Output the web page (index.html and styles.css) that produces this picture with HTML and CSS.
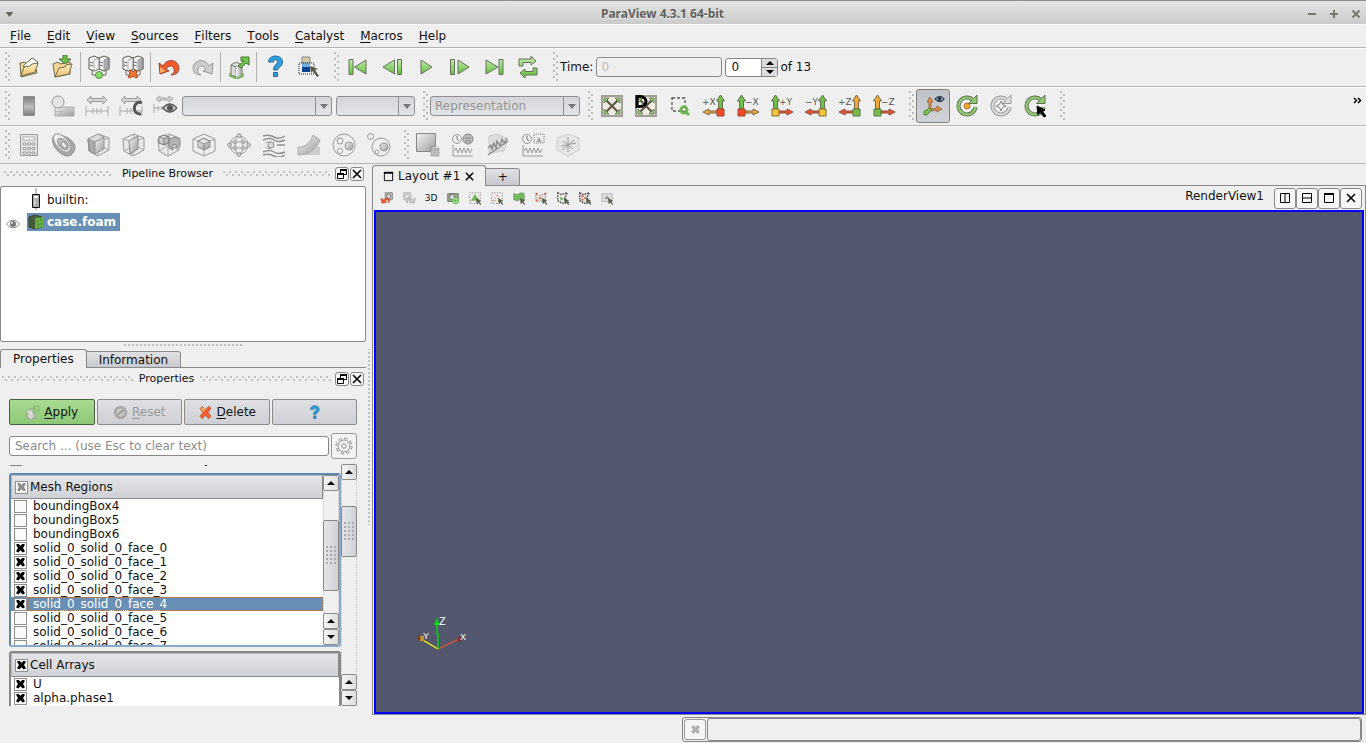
FILE: index.html
```
<!DOCTYPE html>
<html lang="en">
<head>
<meta charset="utf-8">
<title>ParaView 4.3.1 64-bit</title>
<link rel="stylesheet" href="styles.css">
</head>
<body>
<svg class="sprite" aria-hidden="true">
  <defs>
    <linearGradient id="green" x1="0" y1="0" x2="0" y2="1"><stop offset="0" stop-color="#c5eab0"/><stop offset="1" stop-color="#5fbf38"/></linearGradient>
    <linearGradient id="grey" x1="0" y1="0" x2="1" y2="1"><stop offset="0" stop-color="#f2f2f2"/><stop offset="1" stop-color="#9c9c9c"/></linearGradient>
    <linearGradient id="legendFill" x1="0" y1="0" x2="0" y2="1"><stop offset="0" stop-color="#7c7c7c"/><stop offset=".55" stop-color="#bdbdbd"/><stop offset="1" stop-color="#7c7c7c"/></linearGradient>
    <linearGradient id="folderFill" x1="0" y1="0" x2="0" y2="1"><stop offset="0" stop-color="#fff0c8"/><stop offset="1" stop-color="#efc168"/></linearGradient>
    <linearGradient id="metal" x1="0" y1="0" x2="1" y2="0"><stop offset="0" stop-color="#fff"/><stop offset="1" stop-color="#999"/></linearGradient>
  </defs>
  <symbol id="folder" viewBox="0 0 24 24"><path d="M3 8l5-1 1 2 9-2v3l2 8-12 3-4 1z" fill="#f6d693" stroke="#6e6a50"/><path d="M6 11l9-8 6 4-6 8z" fill="#fff" stroke="#6e6a50"/><path d="M4 21l3-9 6-1 2-2 6-1-3 9z" fill="url(#folderFill)" stroke="#6e6a50"/></symbol>
  <symbol id="folderDown" viewBox="0 0 24 24"><path d="M2 9l5-2 2 2 10-2v12L4 22z" fill="#f6d693" stroke="#6e6a50"/><path d="M4 22l4-9 6-1 1-2 6-1-3 10z" fill="url(#folderFill)" stroke="#6e6a50"/><path d="M12 0h4v4h4l-6 5-6-5h4z" fill="#6cbf4c" stroke="#4b7a36"/></symbol>
  <symbol id="towers" viewBox="0 0 24 24"><path d="M2 3l5-2 5 2v11l-5 2-5-2zM12 3l5-2 5 2v11l-5 2-5-2z" fill="#f4f4f4" stroke="#5e5a50"/><path d="M7 5l5-2v11l-5 2zM17 5l5-2v11l-5 2z" fill="url(#metal)" stroke="#777" stroke-width=".6"/><path d="M3 7l3 1M3 10l3 1M13 7l3 1M13 10l3 1M5 15v5h4M19 15v5h-4" fill="none" stroke="#6e6a60"/></symbol>
  <symbol id="connect" viewBox="0 0 24 24"><use href="#towers"/><circle cx="12" cy="20" r="3.500" fill="#8edc6b" stroke="#4f8d37"/></symbol>
  <symbol id="disconnect" viewBox="0 0 24 24"><use href="#towers"/><path d="M8 16l2-1 2 2 2-2 2 1-1 3 2 3-2 1-3-2-3 2-2-1 2-3z" fill="#f37b35" stroke="#a5461c"/></symbol>
  <symbol id="undo" viewBox="0 0 24 24"><path d="M2 8l1 11 9-3-3-2c2-4 7-4 8 0 1 3-1 5-3 6 5 0 8-3 8-7C21 4 10 3 6 11z" fill="#f75b2d" stroke="#8e4a32"/><path d="M3 12l6 4-6 2z" fill="#f5a75e"/></symbol>
  <symbol id="redo" viewBox="0 0 24 24"><path d="M22 8l-1 11-9-3 3-2c-2-4-7-4-8 0-1 3 1 5 3 6-5 0-8-3-8-7C3 4 14 3 18 11z" fill="#ccc" stroke="#999"/></symbol>
  <symbol id="export" viewBox="0 0 24 24"><path d="M4 10l5-3 6 3v10l-6 2-5-2z" fill="#ddd" stroke="#707060"/><path d="M4 10l5 2 6-2M9 12v10" fill="none" stroke="#777"/><path d="M9 12l6-2v10l-6 2z" fill="url(#metal)"/><path d="M3 18v3l5 2h4l4-2v-3" fill="none" stroke="#66b54a" stroke-width="1.500"/><path d="M11 11l6-5h-3V2h8v8l-3-2-5 5z" fill="#6fc64c" stroke="#44702f"/></symbol>
  <symbol id="question" viewBox="0 0 24 24"><path d="M5.500 7c0-8 14-8 14 0 0 5-5 5-5 8h-4c0-5 4-6 4-8 0-3-4-3-4 0zM10.500 17.500h4v4h-4z" fill="#2f9fe0" stroke="#286a95"/></symbol>
  <symbol id="pickData" viewBox="0 0 24 24"><path d="M5 2h8v6H5z" fill="#d9caa3" stroke="#888"/><path d="M5 8h8v4H5z" fill="#72aee0"/><path d="M5 12h8v5H5z" fill="#0b3f91"/><path d="M2 8h15v11H2z" fill="none" stroke="#222" stroke-dasharray="1 1"/><path d="M13 11l8 3-3 1 4 6-2 1-4-6-2 2z" fill="#55584a"/></symbol>
  <symbol id="first" viewBox="0 0 24 24"><path d="M3 4.500h4v15H3zM20 5v14L8.500 12z" fill="url(#green)" stroke="#66705a"/></symbol>
  <symbol id="prev" viewBox="0 0 24 24"><path d="M17.500 4.500h4v15h-4zM14.500 5v14L3 12z" fill="url(#green)" stroke="#66705a"/></symbol>
  <symbol id="play" viewBox="0 0 24 24"><path d="M7 5v14l11-7z" fill="url(#green)" stroke="#66705a"/></symbol>
  <symbol id="next" viewBox="0 0 24 24"><path d="M2.500 4.500h4v15h-4zM10 5v14l11-7z" fill="url(#green)" stroke="#66705a"/></symbol>
  <symbol id="last" viewBox="0 0 24 24"><path d="M17 4.500h4v15h-4zM4 5v14l12-7z" fill="url(#green)" stroke="#66705a"/></symbol>
  <symbol id="loop" viewBox="0 0 24 24"><path d="M3 11V4h12V1l5 5-5 4V7.500H7V11zM21 13v7H9v3l-5-5 5-4v2.500h8V13z" fill="url(#green)" stroke="#66705a"/></symbol>
  <symbol id="legend" viewBox="0 0 24 24"><path d="M6.500 2.500h11v19h-11z" fill="url(#legendFill)" stroke="#909090"/></symbol>
  <symbol id="colorEdit" viewBox="0 0 24 24"><path d="M4 13h19v9H4z" fill="url(#grey)" stroke="#aaa"/><path d="M10 13v9M16 13v9M4 17.500h19" stroke="#bbb"/><circle cx="7" cy="8" r="6" fill="#e4e4e4" stroke="#999"/></symbol>
  <symbol id="range" viewBox="0 0 24 24"><path d="M2 6l4-4v2.500h12V2l4 4-4 4V7.500H6V10z" fill="#d5d5d5" stroke="#999"/><path d="M1 17h22M1 12v10M23 12v10M8 14v6M16 14v6M12 14v6" fill="none" stroke="#aaa"/></symbol>
  <symbol id="rangeC" viewBox="0 0 24 24"><use href="#range"/><path d="M23 9c-9-4-11 12-1 11" fill="none" stroke="#555" stroke-width="3"/></symbol>
  <symbol id="rangeEye" viewBox="0 0 24 24"><path d="M3 5l4-3v2h9V2l4 3-4 3V6H7v2zM1 14h11M1 10v9M5 12v5M9 12v4" fill="#d5d5d5" stroke="#aaa"/><path d="M10 14q7-8 14 0-7 8-14 0z" fill="#ccc" stroke="#555" stroke-width="1.500"/><circle cx="17" cy="14" r="3" fill="#555"/></symbol>
  <symbol id="calc" viewBox="0 0 24 24"><path d="M3.500 1.500h17v21h-17z" fill="#e5e5e5" stroke="#999"/><path d="M6 4h12v3H6z" fill="#fff" stroke="#aaa"/><path d="M6 10h3v2H6zm4.500 0h3v2h-3zm4.500 0h3v2h-3zm-9 4.500h3v2H6zm4.500 0h3v2h-3zm4.500 0h3v2h-3zM6 19h3v2H6zm4.500 0h3v2h-3zm4.500 0h3v2h-3z" fill="#fff" stroke="#8c8c8c" stroke-width=".8"/></symbol>
  <symbol id="contour" viewBox="0 0 24 24"><path d="M1 4C8-1 22 6 23 14c0 5-4 9-8 9C6 21-1 12 1 4z" fill="#aaa" stroke="#888"/><ellipse cx="10" cy="10" rx="11" ry="6" transform="rotate(48 10 10)" fill="#eee" stroke="#999"/><ellipse cx="11" cy="11" rx="7" ry="4" transform="rotate(48 11 11)" fill="#bbb" stroke="#999"/><ellipse cx="12" cy="12" rx="3.500" ry="2" transform="rotate(48 12 12)" fill="#eee" stroke="#999"/></symbol>
  <symbol id="cube" viewBox="0 0 24 24"><path d="M1 6l11-5 10 4v12l-11 6-9-5z" fill="#e9e9e9" stroke="#999"/><path d="M1 6l10 3 11-4M11 9v14M12 1v11M2 18l10-6 10 5" fill="none" stroke="#aaa"/></symbol>
  <symbol id="clip" viewBox="0 0 24 24"><use href="#cube"/><path d="M1 6l7 3v12l-6-3z" fill="#aaa" stroke="#888"/><path d="M1 6l10-5 6 3-9 5z" fill="#ddd" stroke="#999"/><path d="M8 9l9-5v12l-9 5z" fill="url(#grey)" stroke="#999"/></symbol>
  <symbol id="slice" viewBox="0 0 24 24"><use href="#cube"/><path d="M7 8l9-5v13l-8 5z" fill="url(#grey)" stroke="#888"/></symbol>
  <symbol id="threshold" viewBox="0 0 24 24"><use href="#cube"/><path d="M2 4l5-2 5 2v6l-5 2-5-2z" fill="url(#grey)" stroke="#777"/><path d="M2 4l5 2 5-2M7 6v6" fill="none" stroke="#888"/><path d="M12 6l6-2 5 2v7l-4 2v-4l-3 1v5l-4-2z" fill="#b2b2b2" stroke="#888"/></symbol>
  <symbol id="subset" viewBox="0 0 24 24"><path d="M1 6l11-5 11 5v12l-11 5-11-5z" fill="#eee" stroke="#999"/><path d="M6 8l6-3 6 3v6l-6 3-6-3zM6 8l6 3 6-3M12 11v6" fill="url(#grey)" stroke="#888"/><path d="M12 17v6M1 6l5 2M23 6l-5 2" stroke="#aaa"/></symbol>
  <symbol id="glyph" viewBox="0 0 24 24"><circle cx="12" cy="12" r="9" fill="#eee" stroke="#999"/><ellipse cx="12" cy="12" rx="4" ry="9" fill="none" stroke="#999"/><path d="M3 9h18M3 15h18" stroke="#999"/><g fill="#ccc" stroke="#888" stroke-width=".7"><circle cx="12" cy="2.500" r="2"/><circle cx="12" cy="21.500" r="2"/><circle cx="2.500" cy="12" r="2"/><circle cx="21.500" cy="12" r="2"/><circle cx="8" cy="9" r="1.700"/><circle cx="16" cy="9" r="1.700"/><circle cx="8" cy="15" r="1.700"/><circle cx="16" cy="15" r="1.700"/></g></symbol>
  <symbol id="stream" viewBox="0 0 24 24"><path d="M1 3q6-2 11 1t11-1M1 7q7-3 11 0t11 0M1 19q7-3 11 0t11 0M1 22q6-2 11 1t11-1M15 12h8" fill="none" stroke="#909090" stroke-width="1.500"/><path d="M3 10q6-3 9 2-3 6-9 2" fill="none" stroke="#aaa"/><circle cx="9" cy="12" r="3" fill="#ddd" stroke="#888"/></symbol>
  <symbol id="warp" viewBox="0 0 24 24"><path d="M10 14h13v8H4z" fill="#ccc"/><path d="M1 14c7 1 13-5 15-12l7 5c-2 7-8 11-14 14l-8 1z" fill="url(#grey)" stroke="#aaa"/></symbol>
  <symbol id="group" viewBox="0 0 24 24"><circle cx="12" cy="12" r="11" fill="#eee" stroke="#999"/><circle cx="8" cy="8" r="3" fill="#eee" stroke="#999"/><circle cx="17" cy="13" r="4" fill="url(#grey)" stroke="#999"/><circle cx="8" cy="18" r="2.500" fill="#fff" stroke="#999"/></symbol>
  <symbol id="extract" viewBox="0 0 24 24"><circle cx="14" cy="14" r="9" fill="#eee" stroke="#999"/><circle cx="3.500" cy="3.500" r="3" fill="#eee" stroke="#999"/><circle cx="17" cy="14" r="4" fill="url(#grey)" stroke="#999"/><circle cx="10" cy="19" r="2" fill="#fff" stroke="#999"/></symbol>
  <symbol id="selExtract" viewBox="0 0 24 24"><path d="M.5.500h19v13h-5v5H.5z" fill="url(#grey)" stroke="#888"/><path d="M15 15h8v8h-8z" fill="#bbb" stroke="#999" stroke-dasharray="2 1"/></symbol>
  <symbol id="wave" viewBox="0 0 24 24"><path d="M2 12v11h20M3 18l2-3 2 5 2-5 2 5 2-5 2 5 2-5 2 5 2-4" fill="none" stroke="#999"/></symbol>
  <symbol id="plotTime" viewBox="0 0 24 24"><use href="#wave"/><circle cx="6" cy="6" r="4.500" fill="#eee" stroke="#999"/><path d="M6 3v3l2 2" fill="none" stroke="#777"/><circle cx="17" cy="6" r="5" fill="#bbb" stroke="#888"/><path d="M14 5h6M14 8h6" stroke="#888"/></symbol>
  <symbol id="plotLine" viewBox="0 0 24 24"><path d="M3 3l8-2 11 5-4 12-15 2z" fill="#ddd" stroke="#ccc"/><path d="M2 22l20-14M2 15l3-3 1 5 2-7 2 5 1-7 3 5 2-7 2 4 3-5" fill="none" stroke="#888" stroke-width="1.300"/></symbol>
  <symbol id="plotSel" viewBox="0 0 24 24"><use href="#wave"/><circle cx="6" cy="6" r="4.500" fill="#eee" stroke="#999"/><path d="M6 3v3l2 2" fill="none" stroke="#777"/><path d="M13 1h10v9H13z" fill="none" stroke="#777" stroke-dasharray="1 1"/><path d="M15 9l3-5 3 5z" fill="#aaa"/></symbol>
  <symbol id="probe" viewBox="0 0 24 24"><path d="M1 5l11-4 11 4v12l-11 6-11-6z" fill="#e6e6e6" stroke="#ccc"/><path d="M12 4v15M5 13l15-3M6 17l12-10M7 8l10 8" stroke="#999"/></symbol>
  <symbol id="reset" viewBox="0 0 24 24"><path d="M2 2h20v20H2z" fill="#eeeae0" stroke="#a0a098" stroke-width="2"/><path d="M5 5l14 14M19 5L5 19" stroke="#5a5544" stroke-width="2"/><path d="M4 4h5L4 9zM20 4h-5l5 5zM4 20v-5l5 5zM20 20v-5l-5 5z" fill="#8fcf72" stroke="#5c6b4c" stroke-width=".8"/></symbol>
  <symbol id="resetD" viewBox="0 0 24 24"><use href="#reset"/><path d="M3 2.500h3c8 0 8 10 0 10H3z" fill="none" stroke="#000" stroke-width="3"/></symbol>
  <symbol id="zoomBox" viewBox="0 0 24 24"><path d="M4 4h13v13H4z" fill="none" stroke="#555" stroke-width="1.300" stroke-dasharray="3 2"/><circle cx="16" cy="16" r="4.500" fill="#74bd50"/><circle cx="16" cy="15.500" r="2.200" fill="#e7f6dd" stroke="#4c8534"/><path d="M18 18l3 3" stroke="#70b950" stroke-width="3"/></symbol>
  <symbol id="axUpG" viewBox="0 0 24 24"><path d="M16.500 15V7h-2l4-6 4 6h-2v8z" fill="#71be4c" stroke="#66704f"/></symbol>
  <symbol id="axUpO" viewBox="0 0 24 24"><path d="M16.500 15V7h-2l4-6 4 6h-2v8z" fill="#f3a935" stroke="#766548"/></symbol>
  <symbol id="axSideO" viewBox="0 0 24 24"><path d="M15 17H7v-2l-6 3 6 3v-2h8z" fill="#f3a935" stroke="#766548"/></symbol>
  <symbol id="axSideR" viewBox="0 0 24 24"><path d="M15 17H7v-2l-6 3 6 3v-2h8z" fill="#f7502b" stroke="#805040"/></symbol>
  <symbol id="triad" viewBox="0 0 24 24"><path d="M8 16V8H6l3-5 3 5h-2v7l6-1v-2l5 3-5 3v-2l-6 1z" fill="#f08a32" stroke="#816044" stroke-width=".8"/><path d="M9 14l2 2-5 5H3v-4z" fill="#76bd58" stroke="#557545" stroke-width=".8"/><path d="M14 5q5-5 9 0-4 5-9 0z" fill="#ddd" stroke="#344657" stroke-width="1.300"/><circle cx="18.500" cy="5" r="2" fill="#1e3546"/></symbol>
  <symbol id="spin" viewBox="0 0 24 24"><path d="M17 5A8.500 8.500 0 1 0 20.500 13" fill="none" stroke="#5d6d50" stroke-width="4"/><path d="M22 1v8.500h-8.500z" fill="#91cb74" stroke="#5d6d50"/><path d="M17.500 5.500A8.500 8.500 0 1 0 20.500 13" fill="none" stroke="#91cb74" stroke-width="2.200"/></symbol>
  <symbol id="spinCenter" viewBox="0 0 24 24"><use href="#spin"/><circle cx="12" cy="12" r="3" fill="#f5a52c" stroke="#ad7630"/></symbol>
  <symbol id="spinGrey" viewBox="0 0 24 24"><path d="M17 5A8.500 8.500 0 1 0 20.500 13" fill="none" stroke="#999" stroke-width="4"/><path d="M22 1v8.500h-8.500z" fill="#ddd" stroke="#999"/><path d="M17.500 5.500A8.500 8.500 0 1 0 20.500 13" fill="none" stroke="#ddd" stroke-width="2"/><path d="M12 7l1.500 3.500L17 12l-3.500 1.500L12 17l-1.500-3.500L7 12l3.500-1.500z" fill="#eee" stroke="#888"/></symbol>
  <symbol id="spinPick" viewBox="0 0 24 24"><use href="#spin"/><path d="M14 12l8 4-3 1 4 5-2 1-4-5-2 3z" fill="#000" stroke="#000"/></symbol>
  <symbol id="float" viewBox="0 0 12 12"><path d="M4.500 1.500h6v5h-6zM1.500 5.500h6v5h-6z" fill="#f5f5f5" stroke="#000"/><path d="M4 2h7M1 6h7" stroke="#000" stroke-width="2"/></symbol>
  <symbol id="cross" viewBox="0 0 12 12"><path d="M2 2l8 8M10 2l-8 8" stroke="#000" stroke-width="1.600"/></symbol>
  <symbol id="window" viewBox="0 0 12 12"><path d="M1.500 1.500h9v9h-9z" fill="none" stroke="#000"/><path d="M1 2h10" stroke="#000" stroke-width="2"/></symbol>
  <symbol id="splitH" viewBox="0 0 12 12"><path d="M1.500 1.500h9v9h-9zM6 1v10" fill="none" stroke="#000"/></symbol>
  <symbol id="splitV" viewBox="0 0 12 12"><path d="M1.500 1.500h9v9h-9zM1 6h10" fill="none" stroke="#000"/></symbol>
  <symbol id="chip" viewBox="0 0 16 16"><path d="M6 2h8v8H6z" fill="#c8c4b8" stroke="#777"/><circle cx="10" cy="6" r="2.200" fill="#eee" stroke="#666"/></symbol>
  <symbol id="camUndo" viewBox="0 0 16 16"><use href="#chip"/><path d="M1 8l1 6 6-1-2-2c2-2 4-1 4 3 3-5-2-8-6-4z" fill="#ef542d" stroke="#a0452f" stroke-width=".5"/></symbol>
  <symbol id="camRedo" viewBox="0 0 16 16"><path d="M2 2h8v8H2z" fill="#ddd" stroke="#aaa"/><circle cx="6" cy="6" r="2.200" fill="#eee" stroke="#aaa"/><path d="M15 8l-1 6-6-1 2-2c-2-2-4-1-4 3-3-5 2-8 6-4z" fill="#ccc" stroke="#999" stroke-width=".6"/></symbol>
  <symbol id="camAdd" viewBox="0 0 16 16"><path d="M2 3h12v9H2z" fill="#9baa90" stroke="#667060"/><circle cx="7" cy="7" r="3" fill="#ddd" stroke="#666"/><circle cx="11" cy="11" r="3.500" fill="#b8edaa" stroke="#4fae36"/><path d="M9 11h4M11 9v4" stroke="#4fae36"/></symbol>
  <symbol id="dots" viewBox="0 0 16 16"><path d="M2 2h12v12H2z" fill="none" stroke="#555" stroke-dasharray="1 2"/></symbol>
  <symbol id="pointer" viewBox="0 0 16 16"><path d="M9 8l6 3-2 1 2 3-1 1-2-3-2 2z" fill="#555f49"/></symbol>
  <symbol id="selCells" viewBox="0 0 16 16"><use href="#dots"/><path d="M3 11l5-8 5 8z" fill="#74bd5a"/><use href="#pointer"/></symbol>
  <symbol id="selPoints" viewBox="0 0 16 16"><use href="#dots"/><path d="M4 11l4-7 4 7z" fill="none" stroke="#e67c5c" stroke-width="1.500" stroke-dasharray="1 2"/><use href="#pointer"/></symbol>
  <symbol id="selCellsF" viewBox="0 0 16 16"><path d="M2 3l4 1 4-2 4 1v8l-4-1-4 1-4-1z" fill="#72bd59" stroke="#6d7b66" stroke-dasharray="2 1"/><use href="#pointer"/></symbol>
  <symbol id="selPointsF" viewBox="0 0 16 16"><path d="M2 3l4 2 7-2v8l-7 1-4-2z" fill="#ddd" stroke="#777" stroke-dasharray="1 1"/><path d="M2 3h2M12 3h2M6 8h2M12 11h2M2 11h2" stroke="#e35027" stroke-width="2"/><use href="#pointer"/></symbol>
  <symbol id="selPoly" viewBox="0 0 16 16"><path d="M2 2l4 2 7-2-3 6 4 5-7 1-5-3z" fill="#eee" stroke="#444" stroke-width="1.400" stroke-dasharray="2 1"/><path d="M5 6l4 3-4 2z" fill="#79b85f"/><use href="#pointer"/></symbol>
  <symbol id="selPolyP" viewBox="0 0 16 16"><path d="M2 2l4 2 7-2-3 6 4 5-7 1-5-3z" fill="#ddd" stroke="#444" stroke-width="1.400" stroke-dasharray="2 1"/><path d="M4 6h2M7 8h2M4 10h2" stroke="#e35027" stroke-width="1.500"/><use href="#pointer"/></symbol>
  <symbol id="selBlock" viewBox="0 0 16 16"><path d="M2 3h12v9H2z" fill="#ddd" stroke="#888" stroke-dasharray="1 1"/><path d="M5 9l3-4 3 4z" fill="#999"/><use href="#pointer"/></symbol>
  <symbol id="gear" viewBox="0 0 18 18"><circle cx="9" cy="9" r="7" fill="none" stroke="#888" stroke-width="3" stroke-dasharray="3 2.500"/><circle cx="9" cy="9" r="7" fill="none" stroke="#f0f0f0" stroke-width="1.500" stroke-dasharray="2 3.500" stroke-dashoffset="-.5"/><circle cx="9" cy="9" r="6" fill="#f0f0f0" stroke="#999"/><circle cx="9" cy="9" r="2.200" fill="#fff" stroke="#888"/></symbol>
</svg>

<header class="titlebar">
  <svg class="caret" viewBox="0 0 8 5"><path d="M0 0h8L4 5z"/></svg>
  <h1>ParaView 4.3.1 64-bit</h1>
  <div class="wm">
    <button aria-label="Minimize"><svg viewBox="0 0 10 10"><path d="M1 5h8"/></svg></button>
    <button aria-label="Maximize"><svg viewBox="0 0 10 10"><path d="M1 5h8M5 1v8"/></svg></button>
    <button aria-label="Close window"><svg viewBox="0 0 10 10"><path d="M1.500 1.500l7 7M8.500 1.500l-7 7"/></svg></button>
  </div>
</header>

<nav class="menubar">
  <button><u>F</u>ile</button><button><u>E</u>dit</button><button><u>V</u>iew</button><button><u>S</u>ources</button><button><u>F</u>ilters</button><button><u>T</u>ools</button><button><u>C</u>atalyst</button><button><u>M</u>acros</button><button><u>H</u>elp</button>
</nav>

<div class="toolbar">
  <span class="grip"></span>
  <button class="tool" aria-label="Open"><svg><use href="#folder"/></svg></button>
  <button class="tool" aria-label="Save data"><svg><use href="#folderDown"/></svg></button>
  <span class="sep"></span>
  <button class="tool" aria-label="Connect"><svg><use href="#connect"/></svg></button>
  <button class="tool" aria-label="Disconnect"><svg><use href="#disconnect"/></svg></button>
  <span class="sep"></span>
  <button class="tool" aria-label="Undo"><svg><use href="#undo"/></svg></button>
  <button class="tool" aria-label="Redo"><svg><use href="#redo"/></svg></button>
  <span class="sep"></span>
  <button class="tool" aria-label="Auto apply"><svg><use href="#export"/></svg></button>
  <span class="sep"></span>
  <button class="tool" aria-label="Help"><svg><use href="#question"/></svg></button>
  <button class="tool" aria-label="Find data"><svg><use href="#pickData"/></svg></button>
  <span class="grip next"></span>
  <button class="tool" aria-label="First frame"><svg><use href="#first"/></svg></button>
  <button class="tool" aria-label="Previous frame"><svg><use href="#prev"/></svg></button>
  <button class="tool" aria-label="Play"><svg><use href="#play"/></svg></button>
  <button class="tool" aria-label="Next frame"><svg><use href="#next"/></svg></button>
  <button class="tool" aria-label="Last frame"><svg><use href="#last"/></svg></button>
  <button class="tool" aria-label="Loop"><svg><use href="#loop"/></svg></button>
  <span class="grip next"></span>
  <label class="time-label" for="time">Time:</label>
  <input id="time" class="time-input" value="0" disabled>
  <span class="spinbox">
    <input id="step" value="0" aria-label="Time step">
    <span class="spin-buttons"><button class="up" aria-label="Step up"></button><button class="down" aria-label="Step down"></button></span>
  </span>
  <label for="step">of 13</label>
</div>

<div class="toolbar">
  <span class="grip"></span>
  <button class="tool" aria-label="Color legend" disabled><svg><use href="#legend"/></svg></button>
  <button class="tool" aria-label="Edit color map" disabled><svg><use href="#colorEdit"/></svg></button>
  <button class="tool" aria-label="Rescale to data range" disabled><svg><use href="#range"/></svg></button>
  <button class="tool" aria-label="Rescale to custom range" disabled><svg><use href="#rangeC"/></svg></button>
  <button class="tool" aria-label="Rescale to visible range" disabled><svg><use href="#rangeEye"/></svg></button>
  <span class="combo wide"><select aria-label="Color by" disabled><option></option></select></span>
  <span class="combo narrow"><select aria-label="Component" disabled><option></option></select></span>
  <span class="grip next"></span>
  <span class="combo wide"><select aria-label="Representation" disabled><option>Representation</option></select></span>
  <span class="grip next"></span>
  <button class="tool" aria-label="Reset camera"><svg><use href="#reset"/></svg></button>
  <button class="tool" aria-label="Zoom to data"><svg><use href="#resetD"/></svg></button>
  <button class="tool" aria-label="Zoom to box"><svg><use href="#zoomBox"/></svg></button>
  <button class="tool"><svg viewBox="0 0 24 24"><use href="#axUpG"/><use href="#axSideO"/><path d="M15 15h7v7h-7z" fill="#fa4926" stroke="#8d4a34"/><text x="0" y="11">+X</text></svg></button>
  <button class="tool"><svg viewBox="0 0 24 24"><g class="flip"><use href="#axUpG"/><use href="#axSideO"/></g><path d="M2 15h7v7H2z" fill="#fa4926" stroke="#8d4a34"/><text x="9" y="11">−X</text></svg></button>
  <button class="tool"><svg viewBox="0 0 24 24"><g class="flip"><use href="#axUpG"/><use href="#axSideR"/></g><path d="M2 15h7v7H2z" fill="#f8c43a" stroke="#806d34"/><text x="9" y="11">+Y</text></svg></button>
  <button class="tool"><svg viewBox="0 0 24 24"><use href="#axUpG"/><use href="#axSideR"/><path d="M15 15h7v7h-7z" fill="#f8c43a" stroke="#806d34"/><text x="1" y="11">−Y</text></svg></button>
  <button class="tool"><svg viewBox="0 0 24 24"><use href="#axUpO"/><use href="#axSideR"/><path d="M15 15h7v7h-7z" fill="#76bd4d" stroke="#527742"/><text x="0" y="11">+Z</text></svg></button>
  <button class="tool"><svg viewBox="0 0 24 24"><g class="flip"><use href="#axUpO"/><use href="#axSideR"/></g><path d="M2 15h7v7H2z" fill="#76bd4d" stroke="#527742"/><text x="9" y="11">−Z</text></svg></button>
  <span class="grip next"></span>
  <button class="tool pressed" aria-label="Show orientation axes"><svg><use href="#triad"/></svg></button>
  <button class="tool" aria-label="Show center"><svg><use href="#spinCenter"/></svg></button>
  <button class="tool" aria-label="Reset center" disabled><svg><use href="#spinGrey"/></svg></button>
  <button class="tool" aria-label="Pick center"><svg><use href="#spinPick"/></svg></button>
  <span class="grip next"></span>
  <button class="more" aria-label="More tools"><svg viewBox="0 0 9 7"><path d="M1 1l2.500 2.500L1 6M5 1l2.500 2.500L5 6"/></svg></button>
</div>

<div class="toolbar filters">
  <span class="grip"></span>
  <button class="tool" aria-label="Calculator" disabled><svg><use href="#calc"/></svg></button>
  <button class="tool" aria-label="Contour" disabled><svg><use href="#contour"/></svg></button>
  <button class="tool" aria-label="Clip" disabled><svg><use href="#clip"/></svg></button>
  <button class="tool" aria-label="Slice" disabled><svg><use href="#slice"/></svg></button>
  <button class="tool" aria-label="Threshold" disabled><svg><use href="#threshold"/></svg></button>
  <button class="tool" aria-label="Extract subset" disabled><svg><use href="#subset"/></svg></button>
  <button class="tool" aria-label="Glyph" disabled><svg><use href="#glyph"/></svg></button>
  <button class="tool" aria-label="Stream tracer" disabled><svg><use href="#stream"/></svg></button>
  <button class="tool" aria-label="Warp" disabled><svg><use href="#warp"/></svg></button>
  <button class="tool" aria-label="Group datasets" disabled><svg><use href="#group"/></svg></button>
  <button class="tool" aria-label="Extract level" disabled><svg><use href="#extract"/></svg></button>
  <span class="grip next"></span>
  <button class="tool" aria-label="Extract selection" disabled><svg><use href="#selExtract"/></svg></button>
  <button class="tool" aria-label="Plot global variables" disabled><svg><use href="#plotTime"/></svg></button>
  <button class="tool" aria-label="Plot over line" disabled><svg><use href="#plotLine"/></svg></button>
  <button class="tool" aria-label="Plot selection over time" disabled><svg><use href="#plotSel"/></svg></button>
  <button class="tool" aria-label="Probe" disabled><svg><use href="#probe"/></svg></button>
</div>

<main class="workspace">
  <aside class="dock">
    <div class="dock-title"><i></i><h2>Pipeline Browser</h2><i></i><button aria-label="Float"><svg><use href="#float"/></svg></button><button aria-label="Close"><svg><use href="#cross"/></svg></button></div>
    <div class="tree">
      <div class="node">
        <svg class="server" viewBox="0 0 8 22"><path d="M4 0v6M4 20v2" stroke="#888"/><path d="M.5 6.500h7v13h-7z" fill="#aaa" stroke="#111"/><path d="M2 8h4v2H2z" fill="#fff"/><path d="M2 12h2M2 14h2M2 16h2" stroke="#eee"/></svg>
        <span>builtin:</span>
      </div>
      <div class="node">
        <svg class="eye" viewBox="0 0 14 10"><path d="M.5 5q6.500-8 13 0-6.500 8-13 0z" fill="#fff" stroke="#888"/><circle cx="7" cy="5" r="3" fill="#777"/><circle cx="6" cy="4" r="1" fill="#ddd"/></svg>
        <span class="selected"><svg viewBox="0 0 16 16"><path d="M1 3l6-2 7 2v10l-7 2-6-2z" fill="#465b3a" stroke="#33452b"/><path d="M7 4l8-1v10l-8 2z" fill="#65ad42"/><path d="M9 7h1M12 6h1M10 11h1M13 10h1M3 6h1M4 10h1" stroke="#315f21"/></svg>case.foam</span>
      </div>
    </div>
    <div class="splitter"></div>
    <div class="tabs"><button class="tab active">Properties</button><button class="tab">Information</button></div>
    <div class="dock-title props"><i></i><h2>Properties</h2><i></i><button aria-label="Float"><svg><use href="#float"/></svg></button><button aria-label="Close"><svg><use href="#cross"/></svg></button></div>
    <section class="panel">
      <div class="actions">
        <button class="apply"><svg viewBox="0 0 24 24"><path d="M3 9l7-3 6 3v12l-7 2-6-3z" fill="#c9ccc4" stroke="#7d8777"/><path d="M3 9l6 3 7-3M9 12v11" fill="none" stroke="#fff"/><path d="M11 11l6-6h-3V2h8v8l-3-2-5 5z" fill="#a5d98b" stroke="#6b9c56"/></svg><span><u>A</u>pply</span></button>
        <button disabled><svg viewBox="0 0 24 24"><circle cx="12" cy="12" r="10" fill="#aaa" stroke="#999"/><circle cx="12" cy="12" r="6" fill="#ccc"/><path d="M7 16l10-8" stroke="#999" stroke-width="3"/></svg><span><u>R</u>eset</span></button>
        <button><svg viewBox="0 0 24 24"><path d="M3 6l4-4 5 6 5-6 4 3-5 7 5 6-4 4-5-6-5 6-4-4 5-6z" fill="#fa5a2d" stroke="#9a5736"/><path d="M4 6l3-3 5 5-3 3z" fill="#f1b657"/></svg><span><u>D</u>elete</span></button>
        <button aria-label="Help"><svg><use href="#question"/></svg></button>
      </div>
      <div class="search"><input type="text" aria-label="Search" placeholder="Search ... (use Esc to clear text)"><button aria-label="Advanced"><svg><use href="#gear"/></svg></button></div>
      <div class="scroll">
        <div class="content">
          <div class="cut"><i></i><b></b></div>
          <div class="list focus">
            <div class="list-body">
              <label class="list-head"><input type="checkbox" class="partial" checked>Mesh Regions</label>
              <label><input type="checkbox"><span>boundingBox4</span></label>
              <label><input type="checkbox"><span>boundingBox5</span></label>
              <label><input type="checkbox"><span>boundingBox6</span></label>
              <label><input type="checkbox" checked><span>solid_0_solid_0_face_0</span></label>
              <label><input type="checkbox" checked><span>solid_0_solid_0_face_1</span></label>
              <label><input type="checkbox" checked><span>solid_0_solid_0_face_2</span></label>
              <label><input type="checkbox" checked><span>solid_0_solid_0_face_3</span></label>
              <label class="current"><input type="checkbox" checked><span>solid_0_solid_0_face_4</span></label>
              <label><input type="checkbox"><span>solid_0_solid_0_face_5</span></label>
              <label><input type="checkbox"><span>solid_0_solid_0_face_6</span></label>
              <label><input type="checkbox"><span>solid_0_solid_0_face_7</span></label>
            </div>
            <div class="bar"><button class="up" aria-label="Scroll up"></button><span class="track before"></span><span class="thumb"><i></i></span><span class="track"></span><button class="up" aria-label="Scroll up"></button><button class="down" aria-label="Scroll down"></button></div>
          </div>
          <div class="list cells">
            <div class="list-body">
              <label class="list-head"><input type="checkbox" checked>Cell Arrays</label>
              <label><input type="checkbox" checked><span>U</span></label>
              <label><input type="checkbox" checked><span>alpha.phase1</span></label>
              <label><input type="checkbox" checked></label>
            </div>
          </div>
        </div>
        <div class="bar outer"><button class="up" aria-label="Scroll up"></button><span class="track before"></span><span class="thumb"><i></i></span><span class="track"></span><button class="up" aria-label="Scroll up"></button><button class="down" aria-label="Scroll down"></button></div>
      </div>
    </section>
  </aside>
  <div class="vsplit"></div>
  <section class="views">
    <div class="view-tabs">
      <div class="view-tab active"><svg><use href="#window"/></svg><span>Layout #1</span><button aria-label="Close layout"><svg><use href="#cross"/></svg></button></div>
      <button class="view-tab add">+</button>
      <span class="rest"></span>
    </div>
    <div class="frame">
      <div class="view-bar">
        <button aria-label="Camera undo"><svg><use href="#camUndo"/></svg></button>
        <button aria-label="Camera redo" disabled><svg><use href="#camRedo"/></svg></button>
        <button class="mode">3D</button>
        <button aria-label="Adjust camera"><svg><use href="#camAdd"/></svg></button>
        <button aria-label="Select cells"><svg><use href="#selCells"/></svg></button>
        <button aria-label="Select points"><svg><use href="#selPoints"/></svg></button>
        <button aria-label="Select cells through"><svg><use href="#selCellsF"/></svg></button>
        <button aria-label="Select points through"><svg><use href="#selPointsF"/></svg></button>
        <button aria-label="Select cells with polygon"><svg><use href="#selPoly"/></svg></button>
        <button aria-label="Select points with polygon"><svg><use href="#selPolyP"/></svg></button>
        <button aria-label="Select block"><svg><use href="#selBlock"/></svg></button>
        <span class="view-name">RenderView1</span>
        <span class="view-buttons">
          <button aria-label="Split horizontal"><svg><use href="#splitH"/></svg></button>
          <button aria-label="Split vertical"><svg><use href="#splitV"/></svg></button>
          <button aria-label="Maximize"><svg><use href="#window"/></svg></button>
          <button aria-label="Close view"><svg><use href="#cross"/></svg></button>
        </span>
      </div>
      <div class="viewport">
        <svg class="axes" viewBox="0 0 54 40">
          <path d="M23 34L6 24" stroke="#ff0" stroke-width="1.300"/><path d="M23 34l21-10" stroke="#f2502f" stroke-width="1.300"/><path d="M22 3v16h1v15" fill="none" stroke="#00e010" stroke-width="1.300"/>
          <path d="M4 21h5v5H5z" fill="#c49230"/><path d="M3 21h2v4H3z" fill="#6b3a20"/><path d="M42 25l2-4 3 2-2 4z" fill="#82301f"/><path d="M19 9l3-4 3 4-3 2z" fill="#00e010"/>
          <text x="8" y="24">Y</text><text x="24" y="10" class="z">Z</text><text x="45" y="25">X</text>
        </svg>
      </div>
    </div>
  </section>
</main>

<footer class="status">
  <div class="progress"><button aria-label="Abort" disabled><svg viewBox="0 0 10 10"><path d="M2 2l6 6M8 2l-6 6" stroke="#b0b0b0" stroke-width="3"/></svg></button><span></span></div>
</footer>
</body>
</html>
```

FILE: styles.css
```
* { box-sizing: border-box; }
body {
  margin: 0;
  height: 100vh;
  display: flex;
  flex-direction: column;
  overflow: hidden;
  background: #efefef;
  color: #111;
  font: 12px/14px "DejaVu Sans", sans-serif;
}
button, input, select { font: inherit; color: inherit; margin: 0; }
button { padding: 0; border: 0; background: none; display: flex; align-items: center; justify-content: center; }
h1, h2 { margin: 0; font-weight: normal; }
svg { display: block; flex: none; }
u { text-underline-offset: 2px; }
.sprite { position: absolute; width: 0; height: 0; }

.titlebar {
  display: flex;
  align-items: center;
  height: 24px;
  padding: 3px 5px 0;
  border-top: 1px solid #8f8b8f;
  background: linear-gradient(#e3e3e3, #cbcbcb);
  color: #60605a;
}
.titlebar h1 { flex: 1; padding-left: 4px; text-align: center; font: bold 12px/16px "Noto Sans", sans-serif; text-shadow: 0 1px #f4f4f4; }
.caret { width: 9px; height: 5px; fill: #66665c; }
.wm { display: flex; gap: 12px; }
.wm svg { width: 10px; height: 10px; fill: none; stroke: #77776c; stroke-width: 2; }

.menubar { display: flex; gap: 16px; height: 24px; padding: 0 10px 1px; border-top: 1px solid #fafafa; border-bottom: 1px solid #b4b4b4; }

.toolbar { display: flex; align-items: center; height: 39px; padding: 0 0 2px 5px; border-top: 1px solid #fff; border-bottom: 1px solid #b4b4b4; }
.toolbar.filters { height: 38px; padding-bottom: 1px; }
.tool { width: 34px; height: 34px; flex: none; border-radius: 3px; }
.tool svg { width: 24px; height: 24px; }
.tool text { font: 9px "DejaVu Sans", sans-serif; fill: #555; }
.flip { transform: translateX(24px) scaleX(-1); }
.filters .tool { width: 35px; }
.filters .grip { margin-right: 0; }
.pressed { border: 1px solid #808080; background: linear-gradient(#bfc2c7, #cfd2d6); }
.grip {
  width: 6px;
  height: 30px;
  margin-right: 1px;
  flex: none;
  background: radial-gradient(circle at 1px 1px, #bcbcbc 1px, transparent 1.5px) 0 0 / 6px 6px, radial-gradient(circle at 4px 4px, #bcbcbc 1px, transparent 1.5px) 0 0 / 6px 6px;
}
.grip.next { margin-left: 8px; }
.sep { width: 1px; height: 30px; margin-right: 1px; background: #b0b0b0; }
.time-label { margin-right: 3px; }
.time-input { width: 126px; height: 20px; padding: 0 4px; border: 1px solid #8b8b8b; border-radius: 3px; background: #efefef; color: #bcbcbc; }
.spinbox { display: flex; width: 53px; height: 19px; margin: 1px 2px 0 3px; border: 1px solid #858585; border-radius: 3px; background: #fff; }
.spinbox input { width: 35px; padding: 0 5px; border: 0; background: none; outline: 0; }
.spin-buttons { flex: 1; display: grid; grid-template-rows: 1fr 1fr; border-left: 1px solid #858585; }
.spin-buttons button { background: #dcdde0; }
.spin-buttons .down { border-top: 1px solid #858585; }
.up::before, .down::before { content: ""; border: 4px solid transparent; border-top: 0; border-bottom: 4px solid #000; }
.down::before { border-bottom: 0; border-top: 4px solid #000; }
.combo { display: flex; position: relative; height: 20px; flex: none; }
.combo.wide { width: 150px; }
.combo.narrow { width: 79px; margin-left: 4px; }
.combo select { appearance: none; width: 100%; padding: 0 4px; border: 1px solid #8d8f93; border-radius: 3px; background: linear-gradient(#d3d5d9, #e2e4e8); color: #949494; opacity: 1; }
.combo::after { content: ""; position: absolute; right: 4px; top: 8px; border: 4px solid transparent; border-top: 5px solid #777; border-bottom: 0; }
.combo::before { content: ""; position: absolute; right: 16px; top: 0; bottom: 0; width: 1px; background: #8d8f93; }
.more { margin: 0 4px 10px auto; }
.more svg { width: 9px; height: 7px; fill: none; stroke: #000; stroke-width: 1.5; }

.workspace { flex: 1; min-height: 0; display: flex; }
.dock { width: 366px; flex: none; display: flex; flex-direction: column; min-height: 0; }
.dock-title { display: flex; align-items: center; height: 20px; padding: 0 2px 0 4px; margin-bottom: 2px; font-size: 11px; flex: none; }
.dock-title h2 { font-size: 11px; padding: 0 10px; }
.dock-title.props { height: 22px; padding-left: 2px; margin: 0; }
.dock-title.props h2 { padding: 0 6px; }
.dock-title i { flex: 1; height: 6px; background: radial-gradient(circle at 1px 1px, #c0c0c0 1px, transparent 1.5px) 0 0 / 6px 6px, radial-gradient(circle at 4px 4px, #c0c0c0 1px, transparent 1.5px) 0 0 / 6px 6px; }
.dock-title button { width: 14px; height: 14px; margin-left: 1px; border: 1px solid #888; border-radius: 3px; background: #f6f6f6; }
.dock-title i + button { margin-left: 4px; }
.dock-title svg { width: 12px; height: 12px; }
.tree { height: 156px; flex: none; border: 1px solid #888; border-radius: 2px; background: #fff; }
.node { display: flex; align-items: center; height: 18px; padding-left: 5px; }
.node:first-child { height: 26px; }
.server { width: 8px; height: 22px; margin: 0 7px 2px 26px; }
.eye { width: 14px; height: 10px; margin: 4px 7px 0 0; }
.selected { display: flex; align-items: center; gap: 3px; height: 18px; padding: 0 4px 0 1px; outline: 1px dotted #b3754a; outline-offset: -1px; background: #688fb5; color: #fff; font-weight: bold; }
.selected svg { width: 16px; height: 16px; }
.splitter { height: 7px; width: 118px; margin: 0 auto; flex: none; background: radial-gradient(circle at 1px 1px, #c0c0c0 1px, transparent 1.5px) 0 2px / 4px 7px; }
.tabs { display: flex; align-items: flex-end; height: 19px; flex: none; }
.tabs::after { content: ""; flex: 1; border-bottom: 1px solid #8a8a8a; }
.tab { height: 17px; padding: 0 12px; border: 1px solid #8a8a8a; border-left: 0; border-radius: 0 3px 0 0; background: linear-gradient(#e0e1e4, #c6c9ce); }
.tab.active { height: 19px; border-left: 1px solid #8a8a8a; border-bottom: 0; border-radius: 3px 3px 0 0; background: #efefef; }
.panel { flex: 1; min-height: 0; display: flex; flex-direction: column; padding: 9px 9px 9px; }
.actions { display: grid; grid-template-columns: repeat(4, 1fr); gap: 2px; flex: none; }
.actions button { height: 26px; gap: 4px; border: 1px solid #8c8c8c; border-radius: 2px; background: linear-gradient(#dfe0e3, #cdd0d5); }
.actions .apply { border-color: #4b5f42; background: linear-gradient(#a9db93, #8dc877); }
.actions button:disabled { color: #999; }
.actions svg { width: 15px; height: 15px; }
.search { display: flex; align-items: center; gap: 2px; margin-top: 8px; flex: none; }
.search input { flex: 1; min-width: 0; height: 20px; padding: 0 5px; border: 1px solid #888; border-radius: 3px; background: #fff; }
.search input::placeholder { color: #8c8c8c; opacity: 1; }
.search button { width: 26px; height: 26px; border: 1px solid #999; border-radius: 3px; background: #f3f3f3; }
.search svg { width: 18px; height: 18px; }

.scroll { flex: 1; min-height: 0; display: flex; margin-top: 4px; overflow: hidden; }
.content { flex: 1; min-width: 0; overflow: hidden; }
.cut { height: 10px; display: flex; align-items: flex-start; }
.cut i { width: 12px; height: 1px; margin: 2px 0 0 1px; background: #888; }
.cut b { width: 2px; height: 1px; margin: 2px 0 0 183px; background: #222; }
.list { display: flex; height: 174px; border: 2px solid #5d87ab; border-right-color: #88aac8; border-bottom-color: #88aac8; border-radius: 3px; background: #fff; overflow: hidden; }
.list-body { flex: 1; min-width: 0; overflow: hidden; }
.list label { display: flex; align-items: center; height: 14px; padding-left: 3px; white-space: nowrap; }
.list label span { flex: 1; padding-left: 5px; margin-left: 1px; }
.list .list-head { height: 24px; gap: 2px; padding-left: 3px; border: 1px solid #8a8a8a; border-top-color: #bbb; border-left-color: #bbb; background: linear-gradient(#e4e5e8, #cfd1d6); }
.list input { appearance: none; width: 13px; height: 13px; flex: none; display: grid; place-items: center; border: 1px solid #8f8f8f; background: #fafafa; }
.list input:checked::before { content: ""; width: 9px; height: 9px; background: #000; clip-path: polygon(0 15%, 25% 0, 50% 25%, 75% 0, 100% 15%, 78% 50%, 100% 85%, 75% 100%, 50% 75%, 25% 100%, 0 85%, 22% 50%); }
.list .partial:checked::before { background: #8f8f8f; }
.list .current { background: #688fb5; color: #fff; }
.current span { outline: 1px dotted #b3754a; outline-offset: -1px; }
.list.cells { height: 120px; margin-top: 4px; border-color: #888; }
.bar { width: 16px; flex: none; display: flex; flex-direction: column; background: #e9e9e9; }
.bar button { height: 16px; flex: none; border: 1px solid #8c8c8c; border-radius: 2px; background: linear-gradient(90deg, #f4f4f4, #dcdee1); }
.track { flex: 1; border: 1px dotted #c8c8c8; border-width: 0 1px; background: #f0f0f0; }
.track.before { flex: none; height: 29px; }
.thumb { display: grid; place-items: center; height: 71px; flex: none; border: 1px solid #888; border-radius: 2px; background: linear-gradient(90deg, #e4e5e8, #cfd1d6); }
.thumb i { width: 10px; height: 20px; background: radial-gradient(circle at 1px 1px, #aaa 1px, transparent 1.5px) 0 0 / 4px 4px; }
.outer { padding-top: 1px; }
.outer .track.before { height: 26px; }
.outer .thumb { height: 51px; }

.vsplit { width: 6px; flex: none; background: radial-gradient(circle at 1px 1px, #c0c0c0 1px, transparent 1.5px) 2px 0 / 7px 4px; background-clip: content-box; padding: 185px 0 190px; }
.views { flex: 1; min-width: 0; display: flex; flex-direction: column; padding-top: 1px; }
.view-tabs { display: flex; align-items: flex-end; height: 21px; flex: none; }
.view-tab { height: 18px; border: 1px solid #8a8a8a; border-left: 0; border-radius: 0 3px 0 0; }
.view-tab.active { display: flex; align-items: center; gap: 4px; height: 21px; padding: 0 10px; border-left: 1px solid #8a8a8a; border-bottom: 0; border-radius: 3px 3px 0 0; }
.view-tab svg { width: 11px; height: 11px; }
.view-tab.add { width: 34px; background: linear-gradient(#e0e1e4, #c6c9ce); }
.rest { flex: 1; height: 20px; border-bottom: 1px solid #8a8a8a; }
.frame { flex: 1; min-height: 0; display: flex; flex-direction: column; border: 1px solid #8a8a8a; border-top: 0; padding: 0 1px; }
.view-bar { display: flex; align-items: center; height: 24px; padding: 0 1px 0 2px; flex: none; }
.view-bar > button { width: 22px; height: 20px; flex: none; }
.view-bar > button svg { width: 14px; height: 14px; }
.view-bar > .mode { font-size: 9px; }
.view-name { margin: 0 10px 4px auto; }
.view-buttons { display: flex; margin-right: 1px; }
.view-buttons button { width: 22px; height: 21px; border: 1px solid #8a8a8a; border-radius: 3px; background: #f7f7f7; }
.view-buttons svg { width: 12px; height: 12px; }
.viewport { flex: 1; min-height: 0; display: flex; align-items: flex-end; padding: 0 0 57px 39px; border: 2px solid #00f; background: #52576e; }
.axes { width: 54px; height: 40px; fill: none; }
.axes text { fill: #fff; font: 9px "Liberation Sans", sans-serif; }
.axes .z { font-size: 11px; }

.status { display: flex; justify-content: flex-end; height: 28px; padding: 2px 4px 1px; flex: none; }
.progress { display: flex; width: 680px; border: 1px solid #888; border-radius: 3px; }
.progress button { width: 22px; margin: 1px; border: 1px solid #999; border-radius: 3px; background: #f6f6f6; }
.progress svg { width: 11px; height: 11px; }
.progress span { flex: 1; border: 1px solid #888; border-radius: 3px; }
```
